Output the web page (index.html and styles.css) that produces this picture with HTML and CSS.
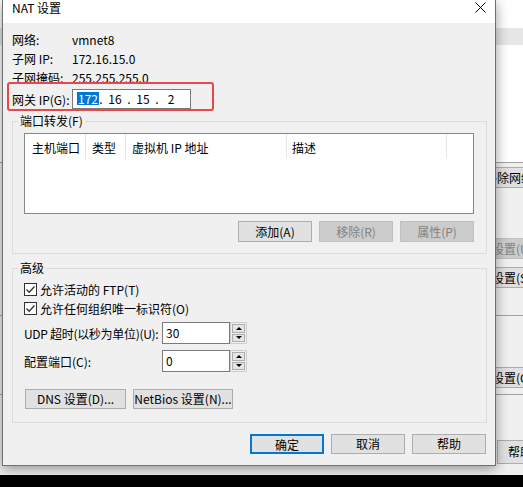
FILE: index.html
```html
<!DOCTYPE html>
<html lang="zh-CN">
<head>
<meta charset="utf-8">
<title>NAT 设置</title>
<link rel="stylesheet" href="styles.css">
</head>
<body>
<div class="screen">
  <div class="bgwin">
    <div class="bg-bar"></div>
    <div class="bg-panel">
      <button class="bgbtn bg-remove">移除网络(O)</button>
      <button class="bgbtn bg-u" disabled>设置(U)</button>
      <button class="bgbtn bg-s">设置(S)</button>
      <div class="bg-line"></div>
      <button class="bgbtn bg-c">设置(C)</button>
      <div class="bg-line bg-line2"></div>
      <button class="bgbtn bg-help">帮助</button>
    </div>
  </div>

  <div class="dialog">
    <div class="titlebar">
      <span class="title">NAT 设置</span>
      <svg class="close" viewBox="0 0 11 11" width="11" height="11"><path d="M0.5 0.5 L10.5 10.5 M10.5 0.5 L0.5 10.5" stroke="#000" stroke-width="1" fill="none"/></svg>
    </div>
    <div class="body">
      <div class="info">
        <span>网络:</span><span>vmnet8</span>
        <span>子网 IP:</span><span>172.16.15.0</span>
        <span>子网掩码:</span><span>255.255.255.0</span>
      </div>
      <div class="gw-row">
        <span class="gw-label">网关 IP(G):</span>
        <div class="ipbox">
          <span class="ipf"><span class="sel">172</span></span><span class="ipdot">.</span>
          <span class="ipf">16</span><span class="ipdot">.</span>
          <span class="ipf">15</span><span class="ipdot">.</span>
          <span class="ipf">2</span>
        </div>
      </div>

      <fieldset class="group g1">
        <legend>端口转发(F)</legend>
        <div class="listview">
          <div class="lv-head">
            <div class="col c1">主机端口</div>
            <div class="col c2">类型</div>
            <div class="col c3">虚拟机 IP 地址</div>
            <div class="col c4">描述</div>
          </div>
        </div>
        <div class="btn-row">
          <button class="btn">添加(A)</button>
          <button class="btn" disabled>移除(R)</button>
          <button class="btn" disabled>属性(P)</button>
        </div>
      </fieldset>

      <fieldset class="group g2">
        <legend>高级</legend>
        <label class="check"><span class="box"><svg viewBox="0 0 11 11" width="11" height="11"><path d="M1.5 5.5 L4.2 8.2 L9.5 2.5" stroke="#333" stroke-width="1.3" fill="none"/></svg></span>允许活动的 FTP(T)</label>
        <label class="check"><span class="box"><svg viewBox="0 0 11 11" width="11" height="11"><path d="M1.5 5.5 L4.2 8.2 L9.5 2.5" stroke="#333" stroke-width="1.3" fill="none"/></svg></span>允许任何组织唯一标识符(O)</label>
        <div class="spin-row">
          <span class="spin-label tight">UDP 超时(以秒为单位)(U):</span>
          <div class="spin-input">30</div>
          <div class="spin-btns"><span class="sb"><i class="up"></i></span><span class="sb"><i class="down"></i></span></div>
        </div>
        <div class="spin-row second">
          <span class="spin-label">配置端口(C):</span>
          <div class="spin-input">0</div>
          <div class="spin-btns"><span class="sb"><i class="up"></i></span><span class="sb"><i class="down"></i></span></div>
        </div>
        <div class="dns-row">
          <button class="btn btn-dns">DNS 设置(D)...</button>
          <button class="btn btn-nb">NetBios 设置(N)...</button>
        </div>
      </fieldset>

      <div class="footer">
        <button class="btn default">确定</button>
        <button class="btn">取消</button>
        <button class="btn">帮助</button>
      </div>
    </div>
    <div class="highlight"></div>
  </div>
</div>
</body>
</html>
```

FILE: styles.css
```css
* { box-sizing: border-box; }
html, body { margin: 0; padding: 0; }
body {
  background: #000;
  width: 523px;
  height: 487px;
  overflow: hidden;
  font-family: "Noto Sans CJK SC", "Noto Sans", sans-serif;
  font-size: 12px;
  color: #000;
}
.screen {
  position: relative;
  width: 523px;
  height: 475px;
  background: #fff;
  overflow: hidden;
}

/* background window */
.bgwin {
  position: absolute;
  inset: 0;
  display: flex;
  flex-direction: column;
  background: #fff;
}
.bg-bar { margin-top: 28px; height: 17px; background: #e6e6e6; }
.bg-panel {
  margin-top: 117px;
  flex: 1;
  border-top: 1px solid #a0a0a0;
  background: #f0f0f0;
  display: flex;
  flex-direction: column;
  align-items: flex-start;
}
.bgbtn {
  font: inherit;
  height: 21px;
  padding: 0 6px;
  background: #e1e1e1;
  border: 1px solid #adadad;
  color: #000;
  text-align: left;
  white-space: nowrap;
  width: 90px;
}
.bgbtn:disabled { background: #cccccc; border-color: #bfbfbf; color: #838383; }
.bg-remove { margin: 4px 0 0 478px; }
.bg-u { margin: 50px 0 0 485px; }
.bg-s { margin: 8px 0 0 485px; }
.bg-line { align-self: stretch; margin-top: 27px; border-top: 1px solid #a0a0a0; }
.bg-c { margin: 51px 0 0 485px; }
.bg-line2 { margin-top: 6px; }
.bg-help { margin: 45px 0 0 497px; height: 24px; padding: 0 0 0 10px; line-height: 18px; }

/* dialog */
.dialog {
  position: absolute;
  left: 2px;
  top: 0;
  width: 494px;
  background: #f0f0f0;
  border: 1px solid #707070;
  border-top: none;
  box-shadow: 0 3px 12px rgba(0, 0, 0, 0.4);
}
.titlebar {
  height: 23px;
  background: #fff;
  display: flex;
  align-items: flex-start;
  padding: 1px 9px 0 9px;
}
.title { line-height: 14px; }
.close { margin-left: auto; margin-top: 1px; display: block; }

.body { padding: 7px 8px 11px 9px; }

.info {
  display: grid;
  grid-template-columns: 60px auto;
  grid-auto-rows: 19px;
  align-items: center;
  line-height: 19px;
}
.gw-row {
  margin-top: 2px;
  height: 20px;
  display: flex;
  align-items: center;
}
.gw-label { width: 60px; }
.ipbox {
  width: 119px;
  height: 20px;
  background: #fff;
  border: 1px solid #7a7a7a;
  display: flex;
  align-items: center;
  padding-left: 4px;
  line-height: 16px;
}
.ipf { width: 20px; text-align: center; }
.ipdot { width: 8px; text-align: center; }
.sel {
  display: inline-block;
  background: #0078d7;
  color: #fff;
  line-height: 13px;
  padding: 0 1px;
}

/* group boxes */
.group {
  margin: 0;
  border: 1px solid #dcdcdc;
  padding: 6px 12px 11px 11px;
  min-width: 0;
}
.group legend {
  padding: 0 2px;
  margin-left: -6px;
  line-height: 12px;
}
.g1 { margin-top: 6px; }
.g2 { margin-top: 8px; padding-bottom: 13px; }

.listview {
  height: 81px;
  background: #fff;
  border: 1px solid #828790;
}
.lv-head { display: flex; height: 25px; }
.col {
  border-right: 1px solid #e5e5e5;
  padding: 2px 0 0 6px;
  line-height: 24px;
  white-space: nowrap;
}
.c1 { width: 61px; padding-left: 7px; }
.c2 { width: 40px; }
.c3 { width: 161px; }
.c4 { width: 160px; padding-left: 5px; }

.btn {
  font: inherit;
  font-size: 12px;
  height: 21px;
  width: 74px;
  padding: 0;
  background: #e1e1e1;
  border: 1px solid #adadad;
  color: #000;
  line-height: 18px;
  white-space: nowrap;
}
.btn:disabled { background: #cccccc; border-color: #bfbfbf; color: #838383; }
.btn-row {
  margin-top: 7px;
  display: flex;
  justify-content: flex-end;
  gap: 7px;
}

.check {
  display: flex;
  align-items: center;
  height: 19px;
  gap: 3px;
}
.box {
  width: 13px;
  height: 13px;
  border: 1px solid #333;
  background: #fff;
  display: flex;
}
.box svg { display: block; }

.spin-row {
  display: flex;
  align-items: center;
  height: 22px;
  margin-top: 4px;
}
.spin-row.second { margin-top: 6px; }
.spin-label { width: 138px; white-space: nowrap; }
.spin-label.tight { letter-spacing: -0.3px; }
.spin-input {
  width: 68px;
  height: 22px;
  border: 1px solid #7a7a7a;
  background: #fff;
  padding-left: 3px;
  line-height: 19px;
}
.spin-btns {
  width: 17px;
  height: 22px;
  border: 1px solid #cdcdcd;
  padding: 1px;
  display: flex;
  flex-direction: column;
  gap: 1px;
}
.sb {
  flex: 1;
  background: #e5e5e5;
  border: 1px solid #adadad;
  display: flex;
  align-items: center;
  justify-content: center;
}
.up, .down {
  width: 0;
  height: 0;
  border-left: 3px solid transparent;
  border-right: 3px solid transparent;
}
.up { border-bottom: 3px solid #000; }
.down { border-top: 3px solid #000; }

.dns-row {
  margin-top: 17px;
  display: flex;
  gap: 7px;
  padding-left: 1px;
}
.dns-row .btn { height: 20px; }
.btn-dns { width: 101px; }
.btn.btn-nb { width: 100px; }

.footer {
  margin-top: 11px;
  display: flex;
  justify-content: flex-end;
  gap: 7px;
  padding-right: 1px;
}
.footer .btn { height: 20px; }
.btn.default { border: 2px solid #0078d7; }

.highlight {
  position: absolute;
  left: 4px;
  top: 82px;
  width: 207px;
  height: 29px;
  border: 2px solid #e8474b;
  border-radius: 3px;
  pointer-events: none;
}
```
